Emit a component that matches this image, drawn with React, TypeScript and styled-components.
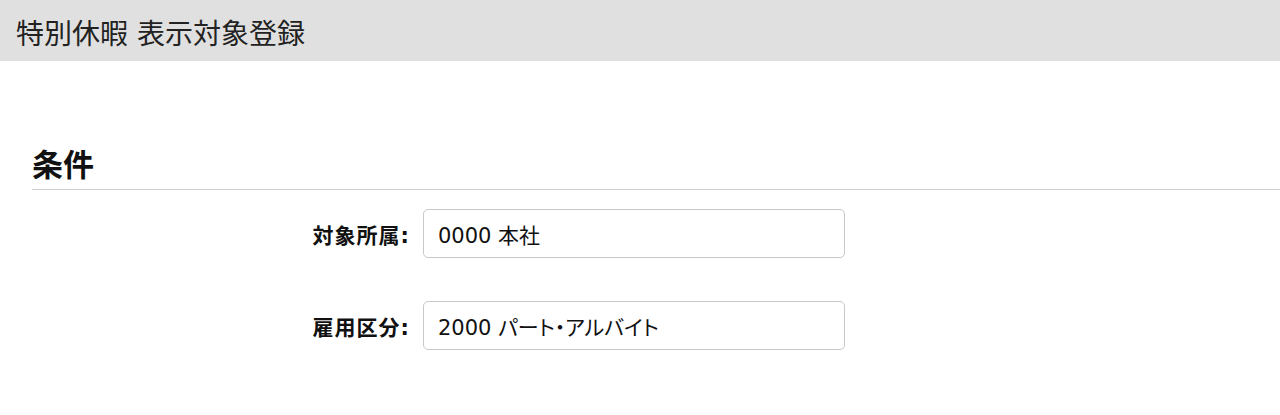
import { Fragment } from 'react';
import styled, { createGlobalStyle } from 'styled-components';

const GlobalStyle = createGlobalStyle`
  html, body {
    margin: 0;
    padding: 0;
    background: #fff;
    font-family: "DejaVu Sans", "Noto Sans CJK JP", sans-serif;
    color: #111;
  }
`;

const Header = styled.header`
  height: 61px;
  background-color: #e0e0e0;
  display: flex;
  align-items: center;
  padding: 2px 16px 0;
  box-sizing: border-box;
`;

const Title = styled.h1`
  margin: 0;
  font-size: 28px;
  font-weight: 400;
  color: #222;
`;

const Main = styled.main`
  padding: 84px 0 0 32px;
`;

const SectionTitle = styled.h2`
  margin: 0;
  font-size: 31px;
  font-weight: 700;
  line-height: 40px;
  padding-bottom: 4px;
  border-bottom: 1px solid #d0d0d0;
  color: #111;
`;

const Form = styled.div`
  display: grid;
  grid-template-columns: 378px 422px;
  column-gap: 13px;
  row-gap: 43px;
  padding-top: 19px;
  align-items: center;
`;

const Label = styled.label`
  text-align: right;
  font-size: 21px;
  font-weight: 700;
  letter-spacing: 1px;
  color: #111;
`;

const Field = styled.input`
  height: 49px;
  box-sizing: border-box;
  border: 1px solid #c8c8c8;
  border-radius: 5px;
  padding: 0 14px;
  font-family: inherit;
  font-size: 21px;
  font-feature-settings: "palt";
  color: #111;
  background: #fff;
  outline: none;
`;

const rows = [
  { id: 'shozoku', label: '対象所属:', value: '0000 本社' },
  { id: 'koyo', label: '雇用区分:', value: '2000 パート・アルバイト' },
];

export default function App() {
  return (
    <>
      <GlobalStyle />
      <Header>
        <Title>特別休暇 表示対象登録</Title>
      </Header>
      <Main>
        <SectionTitle>条件</SectionTitle>
        <Form>
          {rows.map(r => (
            <Fragment key={r.id}>
              <Label htmlFor={r.id}>{r.label}</Label>
              <Field id={r.id} defaultValue={r.value} readOnly />
            </Fragment>
          ))}
        </Form>
      </Main>
    </>
  );
}
